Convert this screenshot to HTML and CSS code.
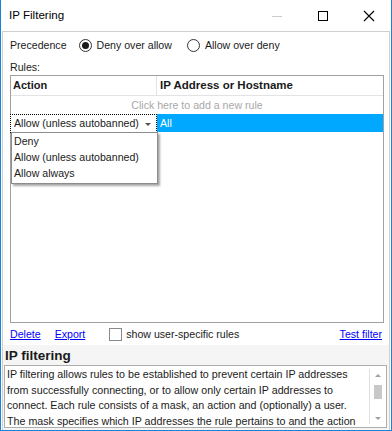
FILE: index.html
```
<!DOCTYPE html>
<html>
<head>
    <title>IP Filtering</title>
    <link rel="stylesheet" href="styles.css">
</head>
<body>
    <div class="window">
        <div class="titlebar">
            <span class="title">IP Filtering</span>
            <div class="controls">
                <svg class="ctl" width="46" height="30" viewBox="0 0 46 30"><path d="M18 15.5h10" stroke="#cccccc" stroke-width="1"/></svg>
                <svg class="ctl" width="46" height="30" viewBox="0 0 46 30"><rect x="18.5" y="10.5" width="9" height="9" fill="none" stroke="#000" stroke-width="1"/></svg>
                <svg class="ctl" width="46" height="30" viewBox="0 0 46 30"><path d="M18 10l10 10M28 10l-10 10" stroke="#000" stroke-width="1.1"/></svg>
            </div>
        </div>
        <div class="client">
            <div class="precedence">
                <span>Precedence</span>
                <label class="radio checked"><span class="circle"></span>Deny over allow</label>
                <label class="radio"><span class="circle"></span>Allow over deny</label>
            </div>
            <div class="rules-label">Rules:</div>
            <div class="grid">
                <div class="grid-head">
                    <div class="col-action">Action</div>
                    <div class="col-ip">IP Address or Hostname</div>
                </div>
                <div class="new-row">Click here to add a new rule</div>
                <div class="row selected">
                    <div class="combo">Allow (unless autobanned)<span class="arrow"></span></div>
                    <div class="cell-ip">All</div>
                </div>
                <div class="dropdown">
                    <div class="option">Deny</div>
                    <div class="option">Allow (unless autobanned)</div>
                    <div class="option">Allow always</div>
                </div>
            </div>
            <div class="actions">
                <a href="#">Delete</a>
                <a href="#">Export</a>
                <label class="check"><span class="box"></span>show user-specific rules</label>
                <a href="#" class="test">Test filter</a>
            </div>
            <div class="help">
                <div class="help-title">IP filtering</div>
                <div class="help-box">
                    <div class="help-text">
                        IP filtering allows rules to be established to prevent certain IP addresses<br>
                        from successfully connecting, or to allow only certain IP addresses to<br>
                        connect. Each rule consists of a mask, an action and (optionally) a user.<br>
                        The mask specifies which IP addresses the rule pertains to and the action
                    </div>
                    <div class="scrollbar">
                        <span class="up"></span>
                        <span class="thumb"></span>
                        <span class="down"></span>
                    </div>
                </div>
            </div>
        </div>
    </div>
</body>
</html>
```

FILE: styles.css
```
* {
    box-sizing: border-box;
}
body {
    margin: 0;
    font-family: "Liberation Sans", Arial, sans-serif;
    font-size: 10.6px;
    color: #1a1a1a;
    background: #ffffff;
}
.window {
    width: 392px;
    height: 431px;
    border: 1px solid #1883d7;
    border-top: none;
    display: flex;
    flex-direction: column;
    background: #ffffff;
    overflow: hidden;
}
.titlebar {
    height: 31px;
    display: flex;
    align-items: center;
    justify-content: space-between;
    flex-shrink: 0;
}
.title {
    font-size: 11.6px;
    color: #000;
    padding-left: 8px;
    padding-bottom: 2px;
}
.controls {
    display: flex;
    margin-right: -1px;
}
.ctl {
    display: block;
}
.client {
    flex: 1;
    margin: 0 1px;
    border: 1px solid #cfcfcf;
    border-bottom: none;
    display: flex;
    flex-direction: column;
    min-height: 0;
}
.precedence {
    display: flex;
    align-items: center;
    height: 16px;
    margin: 5px 0 0 7px;
}
.radio {
    display: flex;
    align-items: center;
    margin-left: 12px;
}
.radio + .radio {
    margin-left: 15px;
}
.circle {
    width: 13px;
    height: 13px;
    border: 1px solid #333;
    border-radius: 50%;
    margin-right: 5px;
    display: flex;
    align-items: center;
    justify-content: center;
    background: #fff;
}
.checked .circle::after {
    content: "";
    width: 7px;
    height: 7px;
    border-radius: 50%;
    background: #1a1a1a;
}
.rules-label {
    margin: 6px 0 0 7px;
    height: 16px;
    line-height: 16px;
}
.grid {
    position: relative;
    height: 248px;
    margin: 0 5px 0 7px;
    border: 1px solid #a0a0a0;
    background: #fff;
}
.grid-head {
    display: flex;
    height: 20px;
    border-bottom: 1px solid #e3e3e3;
    font-weight: bold;
    font-size: 11px;
    color: #1a1a1a;
}
.grid-head > div {
    line-height: 19px;
}
.col-action {
    width: 146px;
    padding-left: 2px;
    border-right: 1px solid #e3e3e3;
}
.col-ip {
    padding-left: 3px;
    font-size: 11.5px;
}
.new-row {
    height: 18px;
    line-height: 18px;
    text-align: center;
    color: #a8a8a8;
}
.row {
    display: flex;
    height: 19px;
}
.combo {
    position: relative;
    width: 147px;
    margin-left: -1px;
    border: 1px dotted #000;
    padding-left: 3px;
    line-height: 17px;
    background: #fff;
}
.arrow {
    position: absolute;
    right: 5px;
    top: 8px;
    border-left: 3px solid transparent;
    border-right: 3px solid transparent;
    border-top: 3px solid #555;
}
.cell-ip {
    flex: 1;
    background: #00a8ff;
    color: #fff;
    padding-left: 3px;
    line-height: 18px;
    height: 18px;
}
.dropdown {
    position: absolute;
    left: 0;
    top: 56px;
    width: 147px;
    padding-bottom: 2px;
    border: 1px solid #8c8c8c;
    background: #fff;
    box-shadow: 2px 2px 2px rgba(0, 0, 0, 0.35);
}
.option {
    height: 16px;
    line-height: 16px;
    padding-left: 2px;
}
.actions {
    display: flex;
    align-items: center;
    height: 22px;
    padding: 0 7px 0 7px;
}
.actions a {
    color: #0000ff;
    margin-right: 14px;
}
.check {
    display: flex;
    align-items: center;
    margin-left: 10px;
    color: #1a1a1a;
}
.box {
    width: 13px;
    height: 13px;
    border: 1px solid #8a8a8a;
    margin-right: 4px;
    background: #fff;
}
.actions a.test {
    margin-left: auto;
    margin-right: 0;
}
.help {
    flex: 1;
    background: #f5f5f5;
    display: flex;
    flex-direction: column;
    padding: 1px 2px 2px 1px;
    min-height: 0;
}
.help-title {
    font-weight: bold;
    font-size: 13.5px;
    height: 19px;
    line-height: 19px;
    padding-left: 1px;
    color: #1a1a1a;
}
.help-box {
    flex: 1;
    display: flex;
    border: 1px solid #adadad;
    background: #fff;
    overflow: hidden;
    min-height: 0;
}
.help-text {
    flex: 1;
    padding: 1px 0 0 2px;
    line-height: 15.5px;
    font-size: 10.7px;
    white-space: nowrap;
    overflow: hidden;
}
.scrollbar {
    width: 17px;
    border-left: 1px solid #e0e0e0;
    margin: 3px 0;
    display: flex;
    flex-direction: column;
    align-items: center;
}
.up, .down {
    width: 0;
    height: 0;
    border-left: 3px solid transparent;
    border-right: 3px solid transparent;
}
.up {
    margin-top: 5px;
    border-bottom: 3px solid #a0a0a0;
}
.down {
    margin-top: auto;
    margin-bottom: 4px;
    border-top: 3px solid #a0a0a0;
}
.thumb {
    width: 8px;
    height: 14px;
    margin-top: 8px;
    background: #c8c8c8;
}
```
